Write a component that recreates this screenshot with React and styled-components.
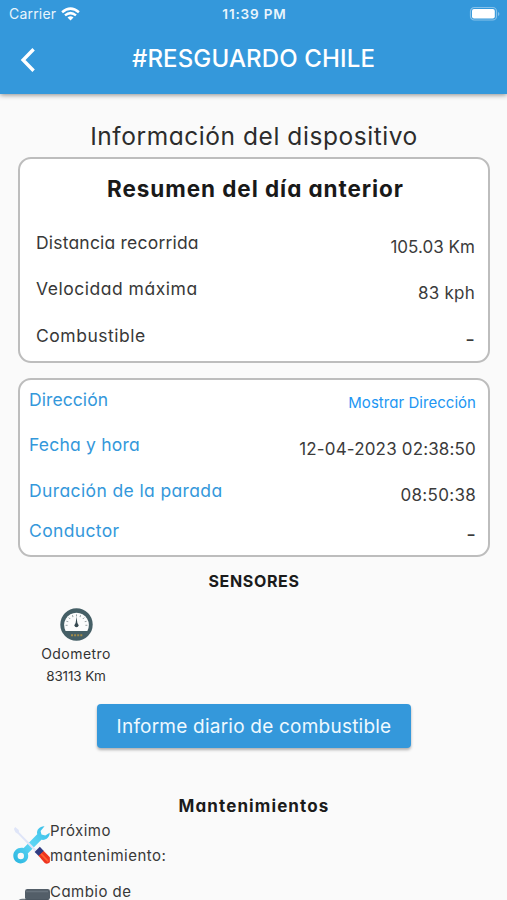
import React from 'react';
import styled, { createGlobalStyle } from 'styled-components';

const GlobalStyle = createGlobalStyle`
  * { box-sizing: border-box; }
  body { margin: 0; background: #fafafa; overflow: hidden; }
`;

const Screen = styled.main`
  display: flex;
  flex-direction: column;
  height: 900px;
  overflow: hidden;
  background: #fafafa;
  color: #222;
  font-family: Inter, sans-serif;
`;

const Header = styled.header`
  flex: none;
  height: 94px;
  background: #3498db;
  color: #fff;
  box-shadow: 0 1px 5px rgba(0, 0, 0, 0.45);
`;

const StatusBar = styled.div`
  display: grid;
  grid-template-columns: 1fr auto 1fr;
  align-items: center;
  height: 27px;
  padding: 0 7px 0 9px;
  font-size: 14px;
  color: #e9f5fc;
`;

const Carrier = styled.div`
  display: flex;
  align-items: center;
  gap: 5px;
  letter-spacing: 0.2px;
`;

const Clock = styled.div`
  font-size: 13.5px;
  font-weight: 600;
  letter-spacing: 0.85px;
`;

const BatteryIcon = styled.svg`
  justify-self: end;
`;

const TitleBar = styled.div`
  display: grid;
  grid-template-columns: 56px 1fr 56px;
  align-items: center;
  height: 63px;
`;

const BackButton = styled.button`
  display: flex;
  padding: 2px 0 0 19px;
  border: 0;
  background: none;
  color: inherit;
`;

const AppTitle = styled.h1`
  margin: 0;
  text-align: center;
  font-size: 24px;
  font-weight: 500;
  letter-spacing: 0.14px;
  line-height: 60px;
  font-feature-settings: 'cv11';
`;

const Content = styled.section`
  display: flex;
  flex-direction: column;
  flex: none;
  padding: 22px 17px 0 18px;
  font-feature-settings: 'cv11';
`;

const PageTitle = styled.h2`
  margin: 0;
  height: 41px;
  line-height: 41px;
  text-align: center;
  font-size: 24.5px;
  font-weight: 400;
  letter-spacing: 0.56px;
  color: #2c2c2c;
`;

const Card = styled.div`
  border: 2px solid #bdbdbd;
  border-radius: 13px;
  background: #fff;
  padding: ${(p) => p.$padding};
  height: ${(p) => p.$height}px;
  margin-bottom: 15px;
`;

const CardTitle = styled.h3`
  margin: 0 0 12.5px;
  height: 59px;
  line-height: 59px;
  text-align: center;
  font-size: 22.5px;
  font-weight: 700;
  letter-spacing: 0.93px;
  color: #191919;
`;

const Row = styled.div`
  display: flex;
  justify-content: space-between;
  height: ${(p) => p.$height}px;
`;

const Label = styled.span`
  font-size: 17.5px;
  font-weight: 400;
  line-height: 24px;
  letter-spacing: ${(p) => p.$spacing}px;
  color: ${(p) => (p.$accent ? '#3498db' : '#383838')};
`;

const Value = styled.span`
  padding-top: ${(p) => p.$drop ?? 4}px;
  font-size: ${(p) => (p.$link ? 15 : 17)}px;
  font-weight: 400;
  line-height: 24px;
  letter-spacing: ${(p) => p.$spacing}px;
  color: ${(p) => (p.$link ? '#2196f3' : '#3b3b3b')};
`;

const EmptyValue = styled(Value)`
  font-size: 21px;
`;

const SectionTitle = styled.h3`
  margin: ${(p) => p.$margin};
  height: 20px;
  line-height: 20px;
  text-align: center;
  font-size: ${(p) => p.$size}px;
  font-weight: 700;
  letter-spacing: ${(p) => p.$spacing}px;
  color: #1b1b1b;
`;

const Sensor = styled.div`
  display: flex;
  flex-direction: column;
  align-items: center;
  width: 116px;
  margin-top: 17px;
  font-size: 14px;
  line-height: 22px;
  color: #333;
`;

const SensorName = styled.span`
  margin-top: 2px;
  letter-spacing: 0.45px;
`;

const SensorValue = styled.span`
  font-size: 13.5px;
  letter-spacing: -0.15px;
`;

const ReportButton = styled.button`
  align-self: center;
  width: 314px;
  height: 44px;
  margin: 17px 0 0;
  padding: 1px 0 0;
  border: 0;
  border-radius: 4px;
  background: #3498db;
  box-shadow: 0 2px 3px rgba(0, 0, 0, 0.3);
  color: #eef9ff;
  font-family: inherit;
  font-size: 19px;
  line-height: 43px;
  letter-spacing: 0.22px;
  font-feature-settings: normal;
`;

const MaintenanceItem = styled.div`
  display: flex;
  align-items: flex-start;
  height: ${(p) => p.$height}px;
  margin-left: -5px;
`;

const MaintenanceText = styled.span`
  width: 130px;
  padding-top: 1px;
  font-size: 15px;
  font-weight: 400;
  line-height: 24.5px;
  letter-spacing: ${(p) => p.$spacing}px;
  color: #383838;
`;

const ItemIcon = styled.svg`
  flex: none;
  margin-top: ${(p) => p.$top}px;
`;

const WifiIcon = () => (
  <svg width="19" height="14" viewBox="0 0 19 14" fill="none" stroke="#fff" strokeWidth="2.5">
    <path d="M1.1 5.2Q9.5-2 17.9 5.2" />
    <path d="M4 8.4Q9.5 3.9 15 8.4" />
    <path d="M6.5 10.4Q9.5 8.2 12.5 10.4L9.5 13.5Z" fill="#fff" stroke="none" />
  </svg>
);

const Battery = () => (
  <BatteryIcon width="31" height="16" viewBox="0 0 31 16">
    <rect x="1.5" y="1.5" width="26" height="12.5" rx="3.8" fill="none" stroke="#85c1e9" strokeWidth="1.2" />
    <rect x="3" y="3" width="22.8" height="9.5" rx="2" fill="#fff" />
    <path d="M29 6v4q1.4-.6 1.4-2T29 6" fill="#85c1e9" />
  </BatteryIcon>
);

const BackIcon = () => (
  <svg width="17" height="26" viewBox="0 0 17 26" fill="none" stroke="#fff" strokeWidth="3.4">
    <path d="M14.6 2.2 4.1 13l10.5 10.8" />
  </svg>
);

const ticks = [-90, -67.5, -45, -22.5, 0, 22.5, 45, 67.5, 90];

const OdometerIcon = () => (
  <svg width="33" height="33" viewBox="0 0 33 33">
    <circle cx="16.5" cy="16.5" r="16.2" fill="#455f66" />
    <path d="M5.6 23A12.4 12.4 0 1 1 27.4 23Z" fill="#fbfcfc" />
    {ticks.map((angle) => (
      <path key={angle} d="M16.5 6.4v2" stroke="#8b969a" strokeWidth="0.9" transform={`rotate(${angle} 16.5 17.3)`} />
    ))}
    <path d="M16.5 8.8 17.5 16h-2Z" fill="#354950" />
    <circle cx="16.5" cy="17.2" r="2" fill="#354950" />
    <path d="M11 27.3h11.5" stroke="#a18b49" strokeWidth="2" strokeDasharray="2 1.1" />
  </svg>
);

const ToolsIcon = () => (
  <ItemIcon $top={8} width="37" height="38" viewBox="0 0 37 38">
    <defs>
      <linearGradient id="wrench" x1="0" y1="1" x2="1" y2="0">
        <stop stopColor="#27b4df" />
        <stop offset="0.5" stopColor="#5ed6f4" />
        <stop offset="1" stopColor="#35bce7" />
      </linearGradient>
    </defs>
    <path
      fill="url(#wrench)"
      fillRule="evenodd"
      d="M31.5.2c-4.8-.2-8.3 3.6-7.3 8L10.7 22.1C5.4 20.7.3 24.6.3 29.8c0 4.3 3.3 7.6 7.5 7.6 5.2 0 8.7-4.9 7-9.8l13.6-13.8c4.4.9 8.4-2.4 8.3-7l-4.4 2.8-3.8-1.1-.9-3.6zM7.8 26.8a3.2 3.2 0 1 1 0 6.4 3.2 3.2 0 0 1 0-6.4Z"
    />
    <path d="m2.2.9 3.6 3.2.2 2.1 17.1 17.2-1.6 1.6L5 8 2.4 6.3.9 3Z" fill="#dfe5f8" />
    <path d="m21.6 25.9 5.2-5.1 4.3 4.5-5.1 5Z" fill="#303c82" />
    <path d="m25.5 29.8 5.2-4.9 6.2 6.3v5q-2.6 2.5-5.2.8Z" fill="#ee3420" />
    <path d="m28.1 27.9 7.2 7.6" stroke="#ff6030" strokeWidth="1.8" />
  </ItemIcon>
);

const FilterIcon = () => (
  <ItemIcon $top={10} width="37" height="26" viewBox="0 0 37 26">
    <path d="M4.5 12.5q1.5-2.8 5-2.8h20V26h-25Z" fill="#717980" />
    <rect x="12" y="0" width="25" height="11" rx="2.4" fill="#535e68" />
    <path d="M13 2.5h22" stroke="#68737d" strokeWidth="1.6" />
    <path d="M12 10.5h24v7H12z" fill="#46515a" />
  </ItemIcon>
);

const summary = [
  { label: 'Distancia recorrida', ls: 0.2, value: '105.03 Km', vs: 0.03 },
  { label: 'Velocidad máxima', ls: 0.52, value: '83 kph', vs: 0.25 },
  { label: 'Combustible', ls: 0.52, value: null },
];

const details = [
  { label: 'Dirección', ls: 0.08, value: 'Mostrar Dirección', vs: 0.04, link: true, drop: 3, height: 45 },
  { label: 'Fecha y hora', ls: 0.2, value: '12-04-2023 02:38:50', vs: 0.16, height: 46 },
  { label: 'Duración de la parada', ls: 0.38, value: '08:50:38', vs: 0.3, height: 40 },
  { label: 'Conductor', ls: 0.36, value: null, height: 30 },
];

export default function App() {
  return (
    <Screen>
      <GlobalStyle />
      <Header>
        <StatusBar>
          <Carrier>
            Carrier
            <WifiIcon />
          </Carrier>
          <Clock>11:39 PM</Clock>
          <Battery />
        </StatusBar>
        <TitleBar>
          <BackButton aria-label="Volver">
            <BackIcon />
          </BackButton>
          <AppTitle>#RESGUARDO CHILE</AppTitle>
        </TitleBar>
      </Header>
      <Content>
        <PageTitle>Información del dispositivo</PageTitle>
        <Card $height={206} $padding="0 13px 0 16px">
          <CardTitle>Resumen del día anterior</CardTitle>
          {summary.map((item) => (
            <Row key={item.label} $height={46.5}>
              <Label $spacing={item.ls}>{item.label}</Label>
              {item.value ? <Value $spacing={item.vs}>{item.value}</Value> : <EmptyValue $spacing={0}>-</EmptyValue>}
            </Row>
          ))}
        </Card>
        <Card $height={179} $padding="7.5px 12px 0 9px">
          {details.map((item) => (
            <Row key={item.label} $height={item.height}>
              <Label $accent $spacing={item.ls}>{item.label}</Label>
              {item.value ? (
                <Value $link={item.link} $drop={item.drop} $spacing={item.vs}>{item.value}</Value>
              ) : (
                <EmptyValue $drop={4} $spacing={0}>-</EmptyValue>
              )}
            </Row>
          ))}
        </Card>
        <SectionTitle $margin="-1px 0 0" $size={16} $spacing={0.65}>SENSORES</SectionTitle>
        <Sensor>
          <OdometerIcon />
          <SensorName>Odometro</SensorName>
          <SensorValue>83113 Km</SensorValue>
        </Sensor>
        <ReportButton>Informe diario de combustible</ReportButton>
        <SectionTitle $margin="48px 0 2px" $size={17} $spacing={1.1}>Mantenimientos</SectionTitle>
        <MaintenanceItem $height={61}>
          <ToolsIcon />
          <MaintenanceText $spacing={0.47}>Próximo mantenimiento:</MaintenanceText>
        </MaintenanceItem>
        <MaintenanceItem $height={61}>
          <FilterIcon />
          <MaintenanceText $spacing={0.47}>Cambio de</MaintenanceText>
        </MaintenanceItem>
      </Content>
    </Screen>
  );
}
